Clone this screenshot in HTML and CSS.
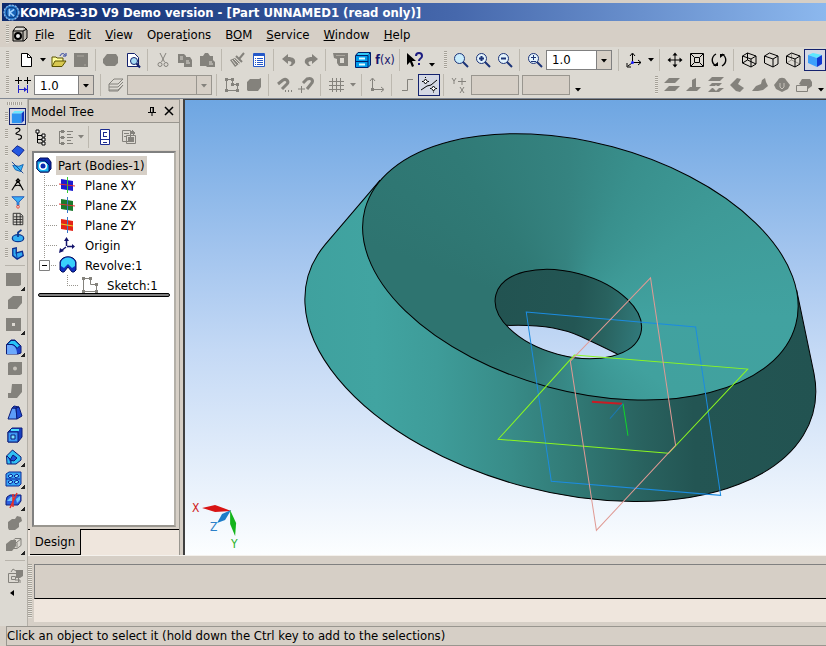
FILE: index.html
```
<!DOCTYPE html>
<html lang="en">
<head>
    <meta charset="UTF-8">
    <meta name="viewport" content="width=device-width, initial-scale=1.0">
    <title>KOMPAS-3D V9 Demo version</title>
    <link rel="stylesheet" href="styles.css">
</head>
<body>
    <header class="titlebar">
        <svg class="logo" viewBox="0 0 16 16"><circle cx="8" cy="8" r="7" fill="#2b7fd0" stroke="#9cc8f4" stroke-dasharray="2 1"/><circle cx="8" cy="8" r="5" fill="#1763b8" stroke="#0b3a80"/><path d="M6 4.500v7M10.500 5 6.500 8l4 3.500" stroke="#9fd2ff" stroke-width="1.500" fill="none"/></svg>
        <h1>KOMPAS-3D V9 Demo version - [Part UNNAMED1 (read only)]</h1>
    </header>

    <nav class="menubar">
        <span class="grip"></span>
        <svg class="doc-icon" viewBox="0 0 16 16"><path d="M1 5 4 1h8l3 3v8l-3 3H1z" fill="#bdb9b0" stroke="#000"/><path d="M1 5h10v10M11 5l4-2" fill="none" stroke="#000"/><circle cx="6" cy="10" r="3" fill="#eee" stroke="#000" stroke-width="2"/><path d="M3 3h8" stroke="#fff"/></svg>
        <button><u>F</u>ile</button>
        <button><u>E</u>dit</button>
        <button><u>V</u>iew</button>
        <button>Opera<u>t</u>ions</button>
        <button>B<u>O</u>M</button>
        <button><u>S</u>ervice</button>
        <button><u>W</u>indow</button>
        <button><u>H</u>elp</button>
    </nav>

    <div class="toolbar" role="toolbar" aria-label="Standard">
        <span class="grip"></span>
        <button aria-label="New"><svg viewBox="0 0 16 16"><path d="M3.500 1.500h6l4 4v9h-10z" fill="#fff" stroke="#000"/><path d="M9.500 1.500v4h4" fill="none" stroke="#000"/></svg></button>
        <button class="arrow" aria-label="New options"><svg viewBox="0 0 6 4"><path d="M0 0h6L3 3.500z"/></svg></button>
        <button aria-label="Open"><svg viewBox="0 0 16 16"><path d="M1 14V5h4l1 1h6v3" fill="#ffff9c" stroke="#5a5200"/><path d="M1 14.500 4 9h11l-4 5.500z" fill="#d8c850" stroke="#5a5200"/><path d="M9 4c1-3 4-3 5-1m1-2v3h-3" fill="none" stroke="#22389c"/></svg></button>
        <button class="off" aria-label="Save"><svg viewBox="0 0 16 16"><path d="M1 1h14v14H1z"/><path d="M11 13h2M4 4h7" stroke="#aaa69e"/></svg></button>
        <span class="sep"></span>
        <button class="off" aria-label="Print"><svg viewBox="0 0 16 16"><path d="M4 2h9l2 3v6l-3 3H3l-3-3V7z"/></svg></button>
        <button aria-label="Preview"><svg viewBox="0 0 16 16"><path d="M2.500 1.500h7l4 4v9h-11z" fill="#fff" stroke="#14226e"/><circle cx="9" cy="9" r="3.500" fill="#a8dcf4" stroke="#14226e"/><path d="m11.500 11.500 3.500 4" stroke="#14226e" stroke-width="2"/></svg></button>
        <span class="sep"></span>
        <button class="off" aria-label="Cut"><svg viewBox="0 0 16 16"><path d="m5 1 4.500 9M11 1 6.500 10" class="line"/><circle cx="5" cy="12.500" r="2" class="line"/><circle cx="11" cy="12.500" r="2" class="line"/></svg></button>
        <button class="off" aria-label="Copy"><svg viewBox="0 0 16 16"><path d="M1 2h6l2 2v7H1zM7 5h6l2 3v7H7z"/><path d="M3 5h3M3 7h3M9 9h3M9 11h4" stroke="#dcd9d2"/></svg></button>
        <button class="off" aria-label="Paste"><svg viewBox="0 0 16 16"><path d="M1 4h3l2-3h3l2 3h3v4l2 2v5H8l-1-1H1z"/><path d="M10 10h3M10 12h4" stroke="#dcd9d2"/></svg></button>
        <span class="sep"></span>
        <button class="off" aria-label="Copy properties"><svg viewBox="0 0 16 16"><path d="m15 1-5 6M7 4l6 6" class="line wide"/><path d="m6 6 5 5-5 4-5-7z"/><path d="m3 8 4 5M5 7l5 5" stroke="#dcd9d2"/></svg></button>
        <button aria-label="Properties"><svg viewBox="0 0 16 16"><path d="M2.500 1.500h11v13h-11z" fill="#fff" stroke="#2458c8"/><path d="M3 2h10v2H3z" fill="#2458c8"/><path d="M4 6.500h1m1 0h6M4 8.500h1m1 0h6M4 10.500h1m1 0h6M4 12.500h1m1 0h6" stroke="#2458c8"/></svg></button>
        <span class="sep"></span>
        <button class="off" aria-label="Undo"><svg viewBox="0 0 16 16"><path d="M1 7 7 2v3c5 0 8 2 7 6l-3 3H8c3-2 4-5-1-5v3z"/></svg></button>
        <button class="off" aria-label="Redo"><svg viewBox="0 0 16 16"><path d="M15 7 9 2v3C4 5 1 7 2 11l3 3h3C5 12 4 9 9 9v3z"/></svg></button>
        <span class="sep"></span>
        <button class="off" aria-label="Library manager"><svg viewBox="0 0 16 16"><path d="M0 1h15v13H6l-2-3V7L1 6z"/><path d="M7 6h4v5H7z" fill="#dcd9d2"/><path d="M3 3.500h9" stroke="#aaa69e"/></svg></button>
        <button aria-label="Document manager"><svg viewBox="0 0 16 16"><path d="M.5 3.500 3 .5h12.500V13L13 15.500H.5z" fill="#009cec" stroke="#00206c"/><path d="M1 3.500h12v12M1 9.500h12M13 3l2-2" fill="none" stroke="#00206c"/><path d="M4 6.500h6M4 12.500h6" stroke="#e0fcff" stroke-width="2"/><path d="M3 2h11" stroke="#60f4ff"/></svg></button>
        <button class="fx" aria-label="Variables"><b>f</b>(x)</button>
        <span class="sep"></span>
        <button aria-label="Context help"><svg viewBox="0 0 16 16"><path d="M0 1v12l3-3 2 5 2-1-2-5h4z"/><path d="M9 4c0-4 6-4 6 0 0 3-3 2-3 5m0 2v2" fill="none" stroke="#1c1c80" stroke-width="2"/></svg></button>
        <button class="arrow low" aria-label="More standard buttons"><svg viewBox="0 0 6 4"><path d="M0 0h6L3 3.500z"/></svg></button>
        <span class="grip"></span>
        <button aria-label="Zoom by frame"><svg viewBox="0 0 16 16"><circle cx="6.500" cy="6.500" r="5" fill="#c8ecfc" stroke="#1c3478"/><path d="m10 10 5 5" stroke="#1c3478" stroke-width="2"/></svg></button>
        <button aria-label="Zoom in"><svg viewBox="0 0 16 16"><circle cx="6.500" cy="6.500" r="5" fill="#e4f4fc" stroke="#1c3478"/><path d="m10 10 5 5M4 6.500h5M6.500 4v5" stroke="#1c3478" stroke-width="2"/></svg></button>
        <button aria-label="Zoom out"><svg viewBox="0 0 16 16"><circle cx="6.500" cy="6.500" r="5" fill="#e4f4fc" stroke="#1c3478"/><path d="m10 10 5 5M4 6.500h5" stroke="#1c3478" stroke-width="2"/></svg></button>
        <span class="sep"></span>
        <button aria-label="Zoom scale"><svg viewBox="0 0 16 16"><circle cx="6.500" cy="6.500" r="5" fill="#e4f4fc" stroke="#1c3478"/><path d="m10 10 5 5" stroke="#1c3478" stroke-width="2"/><path d="M4 5.500h5M6.500 3v5M4 9.500h5" stroke="#1c3478"/></svg></button>
        <span class="combo scale"><select aria-label="Current scale"><option>1.0</option></select><svg viewBox="0 0 15 18"><path d="M0 0h15v18H0z" fill="#d6cfc6"/><path d="M.5 0v18" stroke="#808080"/><path d="M5 8h6l-3 3.500z"/></svg></span>
        <span class="sep"></span>
        <button aria-label="Orientation"><svg viewBox="0 0 16 16"><path d="M6.500 10V2M7 10.500h8M6 11l-4 3" fill="none" stroke="#000"/><path d="m4 4 2.500-3L9 4M12 8l3 2.500-3 2.500M1 11v4h4" fill="none" stroke="#000"/><circle cx="6.500" cy="10.500" r="1.500" fill="#22f"/></svg></button>
        <button class="arrow" aria-label="Orientation list"><svg viewBox="0 0 6 4"><path d="M0 0h6L3 3.500z"/></svg></button>
        <span class="sep"></span>
        <button aria-label="Pan"><svg viewBox="0 0 16 16"><path d="M8 2v12M2 8h12" stroke="#000"/><path d="m5.500 3.500 2.500-3 2.500 3zM5.500 12.500l2.500 3 2.500-3zM3.500 5.500l-3 2.500 3 2.500zM12.500 5.500l3 2.500-3 2.500z"/></svg></button>
        <button aria-label="Fit all"><svg viewBox="0 0 16 16"><path d="M1.500 1.500h13v13h-13zM5.500 5.500h5v5h-5zM2 2l3 3m9-3-3 3M2 14l3-3m9 3-3-3" fill="none" stroke="#000"/></svg></button>
        <button aria-label="Rotate"><svg viewBox="0 0 16 16"><path d="M5 2C0 5 0 11 5 14M11 14c5-3 5-9 0-12" fill="none" stroke="#000" stroke-width="1.400"/><path d="M2 14h5v-4zM14 2H9v4z"/></svg></button>
        <span class="sep"></span>
        <button aria-label="Wireframe"><svg viewBox="0 0 16 16"><path d="m1.500 4 5-3L15 4v8l-5 3-8.500-4zM1.500 4l8.500 3v8M10 7l5-3M6.500 1v7L15 12M6.500 8l-5 3" fill="none" stroke="#000"/></svg></button>
        <button aria-label="Hidden lines removed"><svg viewBox="0 0 16 16"><path d="m1.500 4 5-3L15 4v8l-5 3-8.500-4zM1.500 4l8.500 3v8M10 7l5-3" fill="none" stroke="#000"/></svg></button>
        <button aria-label="Hidden lines thin"><svg viewBox="0 0 16 16"><path d="M6.500 1v7L15 12M6.500 8l-5 3" fill="none" stroke="#99968f"/><path d="m1.500 4 5-3L15 4v8l-5 3-8.500-4zM1.500 4l8.500 3v8M10 7l5-3" fill="none" stroke="#000"/></svg></button>
        <button class="active" aria-label="Shaded"><svg viewBox="0 0 16 16"><path d="m1 3 5-2 9 2-5 3z" fill="#5ce8ff"/><path d="m1 3 9 3v9l-9-4z" fill="#3ca0fc"/><path d="m10 6 5-3v9l-5 3z" fill="#1038d0"/></svg></button>
    </div>

    <div class="toolbar second" role="toolbar" aria-label="Current state">
        <span class="grip"></span>
        <button aria-label="Cursor step"><svg viewBox="0 0 16 16"><path d="M0 3.500h7M9 3.500h7M3.500 0v7M12.500 0v7" stroke="#000"/><path d="M3.500 8v8M12.500 8v8M4 12.500h8" stroke="#22c"/><path d="m9 10 3 2.500L9 15z" fill="#22c"/></svg></button>
        <span class="combo step"><select aria-label="Cursor step value"><option>1.0</option></select><svg viewBox="0 0 15 18"><path d="M0 0h15v18H0z" fill="#d6cfc6"/><path d="M.5 0v18" stroke="#808080"/><path d="M5 8h6l-3 3.500z"/></svg></span>
        <span class="sep"></span>
        <button class="off" aria-label="Layers"><svg viewBox="0 0 16 16"><path d="m1 7 5-5h9l-5 5zM1 10l9 0 5-5M1 13h9l5-5M1 7v7h9l5-6" class="line"/></svg></button>
        <span class="combo layer"><select aria-label="Current layer" disabled><option></option></select><svg viewBox="0 0 15 18"><path d="M.5 0v18" stroke="#99968f"/><path d="M5 8h6l-3 3.500z" fill="#84827c"/></svg></span>
        <span class="sep"></span>
        <button class="off" aria-label="Sketch"><svg viewBox="0 0 16 16"><path d="M2.500 2.500h6v5h5v6h-11z" class="line"/><path d="M1 1h3v3H1zM7 1h3v3H7zM7 6h3v3H7zM12 6h3v3h-3zM12 12h3v3h-3zM1 12h3v3H1z"/></svg></button>
        <button class="off" aria-label="Rebuild"><svg viewBox="0 0 16 16"><path d="m1 5 3-3h9l2-1v9l-3 4H2l-1-1z"/></svg></button>
        <span class="sep"></span>
        <button class="off" aria-label="Snap settings"><svg viewBox="0 0 16 16"><path d="m2 7 5-4c4-2 6 2 4 4l-5 5" class="line thick"/><path d="M9 13h1v2H9zM12 13h1v2h-1zM15 13h1v2h-1z"/></svg></button>
        <button class="off" aria-label="Disable snaps"><svg viewBox="0 0 16 16"><path d="m5 6 4-4c5-2 7 2 4 5l-4 5" class="line thick"/><path d="M0 12h7M3.500 9v7" class="line"/></svg></button>
        <span class="sep"></span>
        <button class="off" aria-label="Grid"><svg viewBox="0 0 16 16"><path d="M4.500 1v14M8.500 1v14M12.500 1v14M1 4.500h15M1 8.500h15M1 12.500h15" class="line"/></svg></button>
        <button class="arrow off" aria-label="Grid options"><svg viewBox="0 0 6 4"><path d="M0 0h6L3 3.500z"/></svg></button>
        <span class="sep"></span>
        <button class="off" aria-label="Local axes"><svg viewBox="0 0 16 16"><path d="M3.500 12V2M4 12.500h10M1 4l2.500-3L6 4M12 10l3 2.500-3 2.500" class="line"/><path d="M2 11h3v3H2z"/></svg></button>
        <span class="sep"></span>
        <button class="off" aria-label="Orthogonal drawing"><svg viewBox="0 0 16 16"><path d="M3 13.500h5.500v-11H14" class="line"/></svg></button>
        <button class="active" aria-label="Round coordinates"><svg viewBox="0 0 16 16"><path d="m0 13 6-4 4-1 6-5" fill="none" stroke="#000"/><path d="m4.500 2 2 2.500-2 2.500-2-2.500zM12.500 9l2 2.500-2 2.500-2-2.500z" fill="#fff" stroke="#000"/><path d="M1 4.500h1M7 4.500h1M4.500 0v1M9 11.500h1M15 11.500h1M12.500 14.500v1" stroke="#000"/></svg></button>
        <span class="sep"></span>
        <span class="xy"><svg viewBox="0 0 16 16"><path d="m1 1 2 3 2-3M3 4v3M9 10l4 6m0-6-4 6M7 4.500h8M11 1v7" class="line"/></svg></span>
        <input class="coord" aria-label="Coordinate X" disabled>
        <input class="coord" aria-label="Coordinate Y" disabled>
        <button class="arrow low" aria-label="More state buttons"><svg viewBox="0 0 6 4"><path d="M0 0h6L3 3.500z"/></svg></button>
        <span class="grip push"></span>
        <button class="off" aria-label="Offset plane"><svg viewBox="0 0 16 16"><path d="M5 1h11l-5 5H0zM5 9h11l-5 5H0z"/></svg></button>
        <button class="off" aria-label="Normal plane"><svg viewBox="0 0 16 16"><path d="m6 3 4-2v9h5l-4 4H0l4-4h2z"/></svg></button>
        <button class="off" aria-label="Middle plane"><svg viewBox="0 0 16 16"><path d="M4 0h12l-4 4H0zM4 6h10l-3 3H1zM4 11h12l-5 4H0z"/><path d="m8 8 3 3-3 3-3-3z" fill="#dcd9d2"/></svg></button>
        <button class="off" aria-label="Angle plane"><svg viewBox="0 0 16 16"><path d="m0 8 7-7 4 1-3 5 6 4-4 4-4-1z"/></svg></button>
        <button class="off" aria-label="Surface plane"><svg viewBox="0 0 16 16"><path d="m0 14 4-5 5-2 1-4 3-2 1 4 2 4-5 4-5 1z"/></svg></button>
        <button class="off" aria-label="Tangent plane"><svg viewBox="0 0 16 16"><path d="M4 3c1-3 7-3 8 0l4 5-2 4-6 3-6-3-2-4z"/><path d="M6 6v4l2 2 2-2V6" fill="none" stroke="#c8c4bc"/></svg></button>
        <button class="off" aria-label="Split line"><svg viewBox="0 0 16 16"><path d="m3 7 3-5h8l2 3v4l-4 3z"/><path d="M.5 8.500h11v6H.5zM12 8l3-2" fill="#dcd9d2" stroke="#84827c"/></svg></button>
        <button class="arrow low" aria-label="More geometry buttons"><svg viewBox="0 0 6 4"><path d="M0 0h6L3 3.500z"/></svg></button>
    </div>

    <div class="workspace">
        <aside class="compact">
            <span class="grip-top"></span>
            <div class="switch"><span class="grip"></span><button class="active" aria-label="Part editing"><svg viewBox="0 0 16 16"><path d="m1 4 3-3h11l-3 3z" fill="#6ce8ff"/><path d="M1 4h11v11H1z" fill="#2c94f0"/><path d="m12 4 3-3v11l-3 3z" fill="#1038c0"/></svg></button></div>
            <div class="switch"><span class="grip"></span><button aria-label="Space curves"><svg viewBox="0 0 16 16"><path d="M5 2c4-2 7 1 4 3L6 7c-2 2 6 1 6 4 0 2-2 3-4 3" fill="none" stroke="#000" stroke-width="1.300"/></svg></button></div>
            <div class="switch"><span class="grip"></span><button aria-label="Surfaces"><svg viewBox="0 0 16 16"><path d="m1 8 6-6 4 2 4 3-6 7-4-3z" fill="#2458e0" stroke="#0c1c80"/></svg></button></div>
            <div class="switch"><span class="grip"></span><button aria-label="Auxiliary geometry"><svg viewBox="0 0 16 16"><path d="m2 5 7 1 5-2-3 8-6-2z" fill="#38b4f4" stroke="#0c5cb0"/><path d="m1 1 13 13" stroke="#0c3c90"/></svg></button></div>
            <div class="switch"><span class="grip"></span><button aria-label="Measurements"><svg viewBox="0 0 16 16"><path d="m8 3-7 11M8 3l6 11M4 9c3-1 5-1 7 0M6 3l2-2 2 2-2 2z" fill="none" stroke="#000" stroke-width="1.300"/></svg></button></div>
            <div class="switch"><span class="grip"></span><button aria-label="Filters"><svg viewBox="0 0 16 16"><path d="M1 2h14L9 8v4H7V8z" fill="#3cb0f8" stroke="#1450b8"/><circle cx="8" cy="13.500" r="1.500" fill="#fff" stroke="#e03020"/></svg></button></div>
            <div class="switch"><span class="grip"></span><button aria-label="Specification"><svg viewBox="0 0 16 16"><path d="M2.500 1.500h8l3 3v10h-11zM6.500 2v13M10.500 2v13M3 5.500h10M3 8.500h10M3 11.500h10" fill="none" stroke="#222"/></svg></button></div>
            <div class="switch"><span class="grip"></span><button aria-label="Reports"><svg viewBox="0 0 16 16"><ellipse cx="8" cy="10.500" rx="6.500" ry="4" fill="#34b0f4" stroke="#0c3890" stroke-width="1.500"/><path d="M8 9V4l4-3" fill="none" stroke="#0c3890" stroke-width="2"/></svg></button></div>
            <div class="switch"><span class="grip"></span><button aria-label="Sheet metal"><svg viewBox="0 0 16 16"><path d="m2 3 4-1v6l7-2 1 5-7 4-5-4z" fill="#30a8f0" stroke="#0c2c90" stroke-width="1.500"/><path d="m6 8 1 6" stroke="#0c2c90"/></svg></button></div>
            <span class="rule"></span>
            <div class="tools">
                <button class="off more" aria-label="Extrude"><svg viewBox="0 0 18 18"><path d="M1 1h15v12l-2 1H1z"/></svg></button>
                <button class="off" aria-label="Cut extrude"><svg viewBox="0 0 18 18"><path d="m3 6 5-4h9v7l-5 6H3z"/></svg></button>
                <button class="off more" aria-label="Hole"><svg viewBox="0 0 18 18"><path d="M1 2h15v13H1z"/><path d="M7 7h3v3H7z" fill="#dcd9d2"/></svg></button>
                <button class="more" aria-label="Fillet"><svg viewBox="0 0 18 18"><path d="M1.500 6.500 6 2h4l6 6v7l-3 1H1.500z" fill="#1c40c8" stroke="#0c1c78"/><path d="M2 7h5c3 1 5 4 5 9H2z" fill="#6ca8fc"/><path d="m2 6.500 4-4h4l5 5-3 3c-1-2-3-4-5-4z" fill="#28c4f8" stroke="#0c1c78"/></svg></button>
                <button class="off" aria-label="Round hole"><svg viewBox="0 0 18 18"><path d="m3 3 2-1h12v12l-2 1H3z"/><circle cx="10" cy="8.500" r="2" fill="#c8c4bc"/></svg></button>
                <button class="off" aria-label="Rib"><svg viewBox="0 0 18 18"><path d="M7 2h10v8l-5 6H3v-5h3z"/></svg></button>
                <button aria-label="Draft"><svg viewBox="0 0 18 18"><path d="m3 15 4-11h4l1 11z" fill="#5c9cf8" stroke="#0c1c78"/><path d="m11 4 3-1 3 9-5 3zM7 4l2-2 5 1-3 1z" fill="#1c48d0" stroke="#0c1c78"/></svg></button>
                <button aria-label="Shell"><svg viewBox="0 0 18 18"><path d="m3 6 4-4h10v9l-4 5H3z" fill="#1840c0" stroke="#0c1c78"/><path d="M3 6h10v10H3z" fill="#3c98f4" stroke="#0c1c78"/><path d="M6 9h4v4H6z" fill="#7ce4fc" stroke="#0c1c78"/><path d="M6 4h8" stroke="#4cdcfc" stroke-width="2"/></svg></button>
                <button class="more" aria-label="Section"><svg viewBox="0 0 18 18"><path d="m1.500 8 6-6L16 9v3l-5 4H2z" fill="#30c0f4" stroke="#0c1c78"/><path d="m5 12 3-5 4 3-3 3zM2 8l4 4v4" fill="#1c50d8" stroke="#0c1c78"/></svg></button>
                <button class="more" aria-label="Array"><svg viewBox="0 0 18 18"><path d="m1 4 3-2h12v12l-2 2H1z" fill="#34a4f4" stroke="#0c2c98"/><path d="m3 6 3-2 2 2-3 2zM9 6l3-2 2 2-3 2zM3 12l3-2 2 2-3 2zM9 12l3-2 2 2-3 2zM1 9h14" fill="#7ce8fc" stroke="#0c1c98"/></svg></button>
                <button class="more" aria-label="Mirror"><svg viewBox="0 0 18 18"><path d="m2 5 3-2h11v6l-3 4H1V9z" fill="#2c60e0" stroke="#0c1c78"/><path d="m2 9 4-4h4l-3 4zM11 7l4-3v4l-3 3z" fill="#6cc8fc"/><path d="m12 1-7 15M8 2v13" stroke="#e83028" stroke-width="1.500"/></svg></button>
                <button class="off" aria-label="Boolean"><svg viewBox="0 0 18 18"><path d="m3 8 4-3h3l2-3 4 1 1 4-3 2v4l-4 3H4l-1-2z"/></svg></button>
                <button class="off more" aria-label="Insert part"><svg viewBox="0 0 18 18"><path d="m1 8 5-4h5v6l-4 5H1z"/><path d="M6.500 6.500 10 2.500h6v7l-4 3H6.500zM7 6.500h5v5M12 6l4-3" class="line"/></svg></button>
            </div>
            <span class="rule"></span>
            <button class="off foot" aria-label="Create object"><svg viewBox="0 0 18 18"><path d="M10 3h7v6l-3 2h-4z"/><path d="M2.500 6.500h10v9h-10zM5.500 9.500h4v3h-4zM9 13h5v3M5 5l2-3 3 2" class="line"/></svg></button>
            <button class="foot-arrow" aria-label="Collapse"><svg viewBox="0 0 4 6"><path d="M4 0v6L0 3z"/></svg></button>
        </aside>

        <div class="center">
            <main class="editor">
                <section class="panel">
                    <div class="panel-head">
                        <h2>Model Tree</h2>
                        <button aria-label="Pin"><svg viewBox="0 0 10 10"><path d="M3.500 1v5M3 1.500h4M6.500 1v5M1 6.500h8M5 7v3" fill="none" stroke="#000"/><path d="M5.500 1h1v5h-1z"/></svg></button>
                        <button aria-label="Close"><svg viewBox="0 0 10 10"><path d="m1 1 8 8M9 1 1 9" stroke="#000" stroke-width="1.500"/></svg></button>
                    </div>
                    <div class="panel-tools">
                        <button aria-label="Structure"><svg viewBox="0 0 16 16"><path d="M4.500 3v11M5 6.500h4M5 10.500h4M5 14h4" fill="none" stroke="#000"/><path d="M3 1h3v3H3zM9 5h3v3H9zM9 9h3v3H9zM9 13h3v3H9z" fill="#fff" stroke="#000"/></svg></button>
                        <button class="off" aria-label="Tree composition"><svg viewBox="0 0 16 16"><path d="M2.500 2v13M3 2.500h5M3 8.500h5M3 14.500h5M10 2.500h6M10 5.500h4M10 8.500h6M10 11.500h4M10 14.500h6" class="line"/><path d="M4 1h3v3H4zM4 7h3v3H4zM4 13h3v3H4z"/></svg></button>
                        <button class="arrow off" aria-label="Composition list"><svg viewBox="0 0 6 4"><path d="M0 0h6L3 3.500z"/></svg></button>
                        <span class="sep"></span>
                        <button aria-label="Relations"><svg viewBox="0 0 16 16"><path d="M3.500.5h9v15h-9z" fill="#fff" stroke="#1c2c90"/><path d="M6.500 3v5M7 3.500h3M7 7.500h3M4 10.500h8M6 13.500h4" fill="none" stroke="#1c2c90"/></svg></button>
                        <button class="off" aria-label="Extra window"><svg viewBox="0 0 16 16"><path d="M1.500 1.500h8v11h-8zM5.500 6.500h9v8h-9zM3 4.500h5M3 7.500h2M11 1l3 3-3 3" class="line"/><path d="M7 8h6v5H7zM9 2h4v3H9z"/></svg></button>
                    </div>
                    <div class="tree">
                        <ul>
                            <li class="root"><svg viewBox="0 0 16 16"><path d="m1 4 3-3h8l3 4v7l-3 3H4l-3-3z" fill="#0828b0" stroke="#04105c"/><path d="M1 4h8l4 4v7H4l-3-3z" fill="#18b4f4" stroke="#04105c"/><circle cx="7" cy="9" r="4" fill="#fff"/><circle cx="7" cy="9" r="2.500" fill="#0828b0"/></svg><span class="picked">Part (Bodies-1)</span></li>
                            <li><svg class="branch" viewBox="0 0 23 20"><path d="M8.500 0v20M8 10.500h13"/></svg><svg viewBox="0 0 16 16"><path d="m2 2 12 2v10L2 12z" fill="#1c1cd0"/><path d="M8.500 0v16" stroke="#3c3"/><path d="m0 7 16 2" stroke="#e03030"/></svg><span>Plane XY</span></li>
                            <li><svg class="branch" viewBox="0 0 23 20"><path d="M8.500 0v20M8 10.500h13"/></svg><svg viewBox="0 0 16 16"><path d="m2 2 12 2v10L2 12z" fill="#1a7a2c"/><path d="M8.500 0v16" stroke="#3878c8"/><path d="m0 7 16 2" stroke="#e03030"/></svg><span>Plane ZX</span></li>
                            <li><svg class="branch" viewBox="0 0 23 20"><path d="M8.500 0v20M8 10.500h13"/></svg><svg viewBox="0 0 16 16"><path d="m2 2 12 2v10L2 12z" fill="#e42418"/><path d="M8.500 0v16" stroke="#3878c8"/><path d="m2 7 12 2" stroke="#e8d820"/></svg><span>Plane ZY</span></li>
                            <li><svg class="branch" viewBox="0 0 23 20"><path d="M8.500 0v20M8 10.500h13"/></svg><svg viewBox="0 0 16 16"><path d="M7.500 9V2M8 9.500h6M7 10l-5 4" fill="none" stroke="#14146c" stroke-width="1.500"/><path d="m5 4 2.500-4L10 4zM13 7l3 2.500-3 2.500zM0 16l1-5 4 3z" fill="#14146c"/></svg><span>Origin</span></li>
                            <li><svg class="branch" viewBox="0 0 23 20"><path d="M8.500 0v4M15 10.500h6"/><path class="box" d="M3.500 5.500h10v10h-10z"/><path class="minus" d="M6 10.500h5"/></svg><svg class="big" viewBox="0 0 18 18"><path d="M1 14V6c2-7 14-7 16 0v8l-2 2h-2l-4-5-4 5H3z" fill="#1030c0" stroke="#04105c"/><path d="M2 10V6c2-6 12-6 14 0v4l-3 2-4-4-4 4z" fill="#38d0fc"/></svg><span>Revolve:1</span></li>
                            <li><svg class="branch deep" viewBox="0 0 45 20"><path d="M31.500 0v11M31 10.500h12"/></svg><svg class="big" viewBox="0 0 18 18"><path d="M2.500 2.500h7v6h6v7h-13z" fill="#fff" stroke="#84827c"/><path d="M1 1h3v3H1zM8 1h3v3H8zM14 7h3v3h-3zM14 14h3v3h-3zM1 14h3v3H1z" fill="#84827c"/></svg><span>Sketch:1</span></li>
                        </ul>
                        <div class="rollback"></div>
                    </div>
                    <div class="tabs"><button>Design</button></div>
                </section>

                <section class="viewport">
                    <svg viewBox="185 100 641 454" preserveAspectRatio="xMinYMin slice" role="img" aria-label="Revolved part">
                        <defs>
                            <linearGradient id="wall" gradientUnits="userSpaceOnUse" x1="304" y1="380" x2="814" y2="368">
                                <stop offset="0" stop-color="#3fa19e"/>
                                <stop offset=".14" stop-color="#41a4a1"/>
                                <stop offset=".26" stop-color="#3e9c99"/>
                                <stop offset=".4" stop-color="#388c88"/>
                                <stop offset=".54" stop-color="#307773"/>
                                <stop offset=".66" stop-color="#29625f"/>
                                <stop offset=".76" stop-color="#235553"/>
                                <stop offset="1" stop-color="#225351"/>
                            </linearGradient>
                            <linearGradient id="bore" gradientUnits="userSpaceOnUse" x1="495" y1="300" x2="641" y2="320">
                                <stop offset="0" stop-color="#225351"/>
                                <stop offset=".55" stop-color="#235654"/>
                                <stop offset=".75" stop-color="#29625f"/>
                                <stop offset="1" stop-color="#31797a"/>
                            </linearGradient>
                            <linearGradient id="backdrop" gradientUnits="userSpaceOnUse" x1="0" y1="100" x2="0" y2="554">
                                <stop offset="0" stop-color="#6ea6e2"/>
                                <stop offset=".33" stop-color="#a2c4ee"/>
                                <stop offset=".55" stop-color="#c4d9f5"/>
                                <stop offset="1" stop-color="#fcfeff"/>
                            </linearGradient>
                            <clipPath id="rim"><ellipse cx="579.500" cy="266.500" rx="222.500" ry="124" transform="rotate(15 579.500 266.500)"/></clipPath>
                            <clipPath id="hole"><ellipse cx="567.500" cy="313.500" rx="74.800" ry="41.600" transform="rotate(15 567.500 313.500)"/></clipPath>
                        </defs>
                        <!-- outer wall -->
                        <path d="M325 244A261 145.500 15 1 0 812.600 372.800L795.300 289.800 379.700 180z" fill="url(#wall)"/>
                        <path d="M379.700 180 325 244A261 145.500 15 1 0 812.600 372.800L795.300 289.800" fill="none" stroke="#000"/>
                        <!-- cone inside the rim -->
                        <g clip-path="url(#rim)">
                            <foreignObject x="350" y="120" width="460" height="290"><div class="cone"></div></foreignObject>
                        </g>
                        <ellipse cx="579.500" cy="266.500" rx="222.500" ry="124" transform="rotate(15 579.500 266.500)" fill="none" stroke="#000"/>
                        <!-- bore -->
                        <g clip-path="url(#hole)">
                            <path d="M490 265h155v96H490z" fill="url(#bore)"/>
                            <path d="M490 326Q548 321 580 336T617 354L620 370H490z" fill="url(#backdrop)" stroke="#000"/>
                        </g>
                        <ellipse cx="567.500" cy="313.500" rx="74.800" ry="41.600" transform="rotate(15 567.500 313.500)" fill="none" stroke="#000"/>
                        <!-- base planes -->
                        <g fill="none">
                            <path d="M525.500 311.500 694.500 326.500 719.500 494.500 550.500 480.500z" stroke="#1c8ce0"/>
                            <path d="M573.500 354.500 746.500 368.500 667.500 452.500 497.500 438.500z" stroke="#8cf820"/>
                            <path d="M649.500 277.500 674.500 444.500 595.500 529.500 569.500 360.500z" stroke="#e09a94"/>
                            <path d="m591 401 30 2" stroke="#c81c24" stroke-width="2"/>
                            <path d="m622 403 5 32" stroke="#10d828"/>
                            <path d="m622 403-13 15" stroke="#1c78b0"/>
                        </g>
                        <!-- orientation triad -->
                        <path d="M231 510 215 504l-13 3 13 4z" fill="#d81414"/>
                        <path d="m231 509-9 4-5 9 8-3z" fill="#1c7cc8"/>
                        <path d="m230 509 0 14 5 12 1-13z" fill="#14b41c"/>
                        <text x="192" y="511" fill="#d02020">X</text>
                        <text x="210" y="530" fill="#2c80c8">Z</text>
                        <text x="231" y="547" fill="#28b028">Y</text>
                    </svg>
                </section>
            </main>

            <div class="properties">
                <span class="grip"></span>
                <div class="prop-body">
                    <div class="prop-page"></div>
                    <div class="prop-tabs"></div>
                </div>
            </div>
        </div>
    </div>

    <footer class="status">Click an object to select it (hold down the Ctrl key to add to the selections)</footer>
</body>
</html>
```
FILE: styles.css
```
* {
    box-sizing: border-box;
}
body {
    margin: 0;
    padding-top: 3px;
    height: 100vh;
    display: flex;
    flex-direction: column;
    overflow: hidden;
    background-color: #d6cfc6;
    color: #000;
    font-family: "DejaVu Sans Condensed", "DejaVu Sans", sans-serif;
    font-size: 13px;
}
button {
    display: flex;
    align-items: center;
    justify-content: center;
    flex: none;
    margin: 0;
    padding: 0;
    border: 0;
    background: none;
    color: inherit;
    font: inherit;
}
svg {
    flex: none;
    overflow: visible;
}
h1, h2 {
    margin: 0;
    font-size: 13px;
}
.titlebar {
    display: flex;
    align-items: center;
    flex: none;
    height: 18px;
    margin-left: 2px;
    padding-left: 1px;
    background: linear-gradient(90deg, #0c2a6e, #4668ac 55%, #8cb8ee);
    color: #fff;
    white-space: nowrap;
}
.logo {
    width: 17px;
    height: 17px;
}
.menubar {
    display: flex;
    align-items: center;
    flex: none;
    height: 26px;
    padding-left: 3px;
}
.menubar button {
    padding: 0 7px;
    height: 20px;
    display: block;
}
.doc-icon {
    width: 16px;
    height: 16px;
}
.grip {
    flex: none;
    width: 3px;
    height: 18px;
    margin: 0 3px;
    background: repeating-linear-gradient(#a5a198 0 1px, #e8e5de 1px 2px);
}

/* Toolbars */
.toolbar {
    display: flex;
    align-items: center;
    flex: none;
    height: 25px;
    padding-left: 3px;
    background-color: #dcd9d2;
    overflow: hidden;
}
.toolbar > .grip:first-child {
    margin-right: 6px;
}
.toolbar.second > .grip:first-child {
    margin-right: 3px;
}
.toolbar button + .grip {
    margin-left: 7px;
}
.second {
    height: 27px;
    border-bottom: 1px solid #808894;
}
.toolbar button, .xy {
    flex: none;
    width: 22px;
    height: 22px;
}
.toolbar button svg, .xy svg {
    width: 16px;
    height: 16px;
}
.xy {
    display: flex;
    align-items: center;
    justify-content: center;
}
.toolbar .arrow {
    width: 11px;
}
.toolbar .arrow svg, .panel-tools .arrow svg {
    width: 6px;
    height: 4px;
}
.toolbar .low {
    align-items: flex-end;
    padding-bottom: 4px;
}
.off svg {
    fill: #84827c;
}
.line {
    fill: none;
    stroke: #84827c;
}
.wide {
    stroke-width: 2;
}
.thick {
    stroke-width: 3;
}
.toolbar .active, .compact .active {
    border: 1px solid #14226e;
    background-color: #d4d8e4;
}
.toolbar .fx {
    color: #14146c;
    font-size: 12px;
}
.sep {
    flex: none;
    width: 1px;
    height: 22px;
    margin: 0 4px 0 3px;
    background-color: #bcb8af;
}
.toolbar button + .push {
    margin-left: auto;
}
.combo {
    display: grid;
    flex: none;
    height: 20px;
    border: 1px solid #808080;
}
.combo select {
    grid-area: 1 / 1;
    width: 100%;
    height: 18px;
    padding: 0 5px;
    appearance: none;
    border: 0;
    border-radius: 0;
    background-color: #fff;
    color: #000;
    font: inherit;
}
.combo select:disabled {
    background-color: #d6cfc6;
    opacity: 1;
}
.combo svg {
    grid-area: 1 / 1;
    z-index: 1;
    justify-self: end;
    width: 15px;
    height: 18px;
    pointer-events: none;
}
.scale {
    width: 66px;
    margin-right: 3px;
}
.step {
    width: 60px;
    margin-right: 3px;
}
.layer {
    width: 85px;
    margin-right: 1px;
    border-color: #99968f;
}
.coord {
    flex: none;
    width: 48px;
    height: 20px;
    margin: 0 2px 0 1px;
    padding: 0;
    border: 1px solid #99968f;
    background-color: #d6cfc6;
}

/* Compact panel on the left */
.workspace {
    display: flex;
    flex: 1;
    min-height: 0;
}
.compact {
    display: flex;
    flex-direction: column;
    flex: none;
    width: 28px;
    padding: 3px 0 0 3px;
    background-color: #dcd9d2;
    border-right: 1px solid #b4b0a8;
}
.grip-top {
    height: 3px;
    margin: 0 5px 3px 4px;
    background: repeating-linear-gradient(90deg, #a5a198 0 1px, #e8e5de 1px 2px);
}
.switch {
    display: flex;
    align-items: center;
    height: 17px;
}
.switch .grip {
    height: 10px;
    margin: 0 1px 0 2px;
}
.switch button {
    width: 17px;
    height: 17px;
}
.switch svg {
    width: 14px;
    height: 14px;
}
.rule {
    flex: none;
    height: 1px;
    margin: 4px 2px;
    background-color: #b8b4ac;
}
.tools button {
    width: 22px;
    height: 22px;
}
.tools button svg {
    width: 18px;
    height: 18px;
}
.more {
    background: linear-gradient(135deg, transparent 50%, #222 50%) 18px 17px / 4px 4px no-repeat;
}
.foot {
    width: 24px;
    height: 22px;
}
.foot svg {
    width: 18px;
    height: 18px;
}
.foot-arrow {
    width: 18px;
    height: 12px;
}
.foot-arrow svg {
    width: 4px;
    height: 6px;
}

.center {
    display: flex;
    flex-direction: column;
    flex: 1;
    min-width: 0;
}
.editor {
    display: flex;
    flex: 1;
    min-height: 0;
}

/* Model tree */
.panel {
    display: flex;
    flex-direction: column;
    flex: none;
    width: 152px;
    margin-right: 3px;
    border-right: 1px solid #99968f;
}
.panel-head {
    display: flex;
    align-items: center;
    gap: 7px;
    height: 24px;
    padding: 0 5px 0 2px;
    border: 1px solid #99968f;
    border-width: 1px 0 1px 1px;
}
.panel-head h2 {
    flex: 1;
    font-weight: normal;
}
.panel-head button svg {
    width: 10px;
    height: 10px;
}
.panel-tools {
    display: flex;
    align-items: center;
    height: 27px;
    padding-left: 1px;
    background-color: #dcd9d2;
}
.panel-tools button {
    width: 24px;
    height: 24px;
}
.panel-tools .arrow {
    width: 8px;
}
.panel-tools button svg {
    width: 16px;
    height: 16px;
}
.tree {
    flex: 1;
    margin: 1px 3px 2px 4px;
    padding-top: 2px;
    border: 2px solid #808080;
    border-right-color: #b4b0a8;
    border-bottom-color: #99968f;
    background-color: #fff;
    overflow: hidden;
}
.tree ul {
    margin: 0;
    padding: 0 0 0 2px;
    list-style: none;
}
.tree li {
    display: flex;
    align-items: center;
    gap: 10px;
    height: 20px;
    white-space: nowrap;
}
.tree li svg {
    width: 16px;
    height: 16px;
}
.tree li .big {
    width: 18px;
    height: 18px;
    margin-right: -2px;
}
.tree li .branch {
    width: 23px;
    height: 20px;
    margin-right: -10px;
    fill: none;
    stroke: #99968f;
    stroke-dasharray: 1 1;
}
.tree li .deep {
    width: 45px;
}
.branch .box {
    stroke: #808080;
    stroke-dasharray: none;
}
.branch .minus {
    stroke: #000;
    stroke-dasharray: none;
}
.tree .root {
    gap: 4px;
}
.picked {
    padding: 2px;
    background-color: #d6cfc6;
}
.rollback {
    height: 4px;
    margin: -2px 4px 0 4px;
    border: 1px solid #000;
    border-radius: 2px;
    background-color: #808080;
}
.tabs {
    display: flex;
    height: 26px;
    padding-left: 2px;
    background: linear-gradient(#000, #000) 0 0 / 100% 1px no-repeat #efe6dd;
}
.tabs button {
    width: 51px;
    border: 1px solid #000;
    border-width: 0 1px 1px 0;
    background-color: #d6cfc6;
}

/* 3D view */
.viewport {
    flex: 1;
    min-width: 0;
    border-left: 2px solid #404040;
    border-top: 1px solid #404040;
    background: linear-gradient(#6ea6e2, #a2c4ee 33%, #c4d9f5 55%, #fcfeff);
    overflow: hidden;
}
.viewport svg {
    display: block;
    width: 100%;
    height: 100%;
    overflow: hidden;
}
.viewport text {
    font-family: "DejaVu Sans Condensed", "DejaVu Sans", sans-serif;
    font-size: 12px;
}
.cone {
    height: 100%;
    background: conic-gradient(at 216px 196px, #358380, #39908d 25deg, #3e9a97 55deg, #41a2a0 90deg, #41a19e 125deg, #3a9390 160deg, #368481 190deg, #307874 220deg, #2e7470 250deg, #2e7470 290deg, #307a76 325deg, #358380);
}

/* Property bar */
.properties {
    display: flex;
    flex: none;
    height: 71px;
    padding: 8px 0 4px;
    border-top: 1px solid #f4f1ec;
}
.properties .grip {
    width: 4px;
    height: 54px;
    margin: 0 2px 0 0;
}
.prop-body {
    display: flex;
    flex-direction: column;
    flex: 1;
}
.prop-page {
    height: 35px;
    border: 1px solid #808080;
    border-right: 0;
    border-bottom-color: #000;
}
.prop-tabs {
    flex: 1;
    background-color: #efe6dd;
}
.status {
    flex: none;
    height: 20px;
    margin-left: 6px;
    border: 1px solid #99968f;
    border-right: 0;
    line-height: 18px;
    white-space: nowrap;
}
```
